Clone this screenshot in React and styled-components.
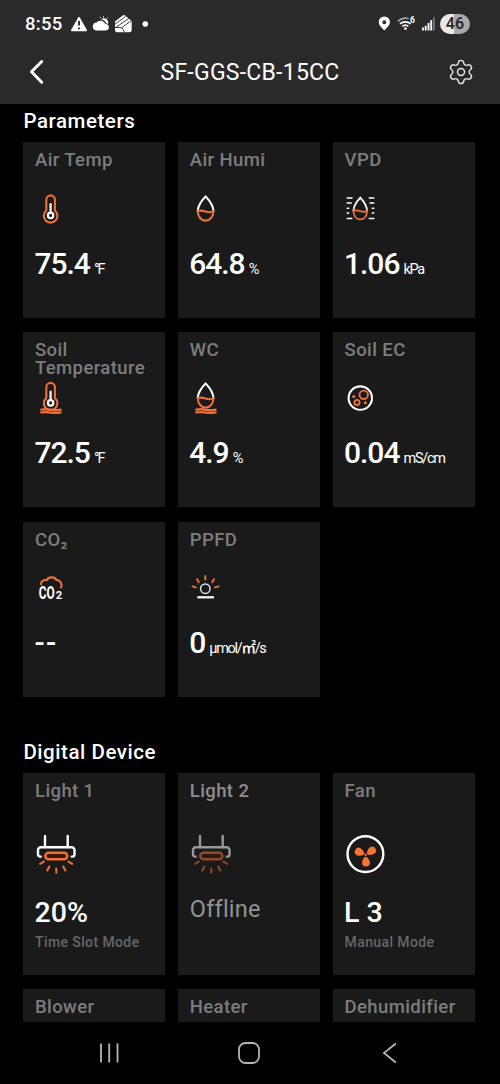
import React from "react";
import styled, { createGlobalStyle } from "styled-components";
import { Settings } from "lucide-react";

const ORANGE = "#ee7039";

const parameters = [
    { id: 1, title: "Air Temp", icon: "temp", value: "75.4", unit: "°F" },
    { id: 2, title: "Air Humi", icon: "drop", value: "64.8", unit: "%" },
    { id: 3, title: "VPD", icon: "vpd", value: "1.06", unit: "kPa" },
    { id: 4, title: "Soil Temperature", icon: "soilTemp", value: "72.5", unit: "°F" },
    { id: 5, title: "WC", icon: "wc", value: "4.9", unit: "%" },
    { id: 6, title: "Soil EC", icon: "ec", value: "0.04", unit: "mS/cm" },
    { id: 7, title: "CO₂", icon: "co2", value: "--" },
    { id: 8, title: "PPFD", icon: "ppfd", value: "0", unit: "μmol/㎡/s" },
];

const devices = [
    { id: 1, title: "Light 1", icon: "light", value: "20%", mode: "Time Slot Mode" },
    { id: 2, title: "Light 2", icon: "light", offline: true },
    { id: 3, title: "Fan", icon: "fan", value: "L 3", mode: "Manual Mode" },
    { id: 4, title: "Blower" },
    { id: 5, title: "Heater" },
    { id: 6, title: "Dehumidifier" },
];

/* ---------- icons ---------- */

const Thermometer = () => (
    <>
        <path d="M11.3 21.6V10.7a4.3 4.3 0 0 1 8.6 0v10.9a6.8 6.8 0 1 1-8.6 0Z" stroke={ORANGE} />
        <circle cx="15.6" cy="26.4" r="2.7" strokeWidth="2.2" />
        <path d="M15.6 23.4V15.2" strokeWidth="2.2" />
    </>
);

const Drop = () => (
    <>
        <path d="M7.7 22C8 17 12 11.2 15.6 7.4c3.6 3.8 7.6 9.6 7.9 14.6" />
        <path d="M7.7 22c.2 6 3.6 9.6 7.9 9.600s7.700-3.600 7.900-9.600c-2.600 1.800-5.200 1.400-7.900.5s-5.300-1.200-7.900-.5Z" stroke={ORANGE} />
    </>
);

const Ground = () => (
    <path d="M6.2 31.6q5-.8 10 .2t9.4-.2M6.2 34.4q5-.6 10 .2t9.4-.2" stroke={ORANGE} strokeWidth="2.3" />
);

const smallIcons = {
    temp: <Thermometer />,
    drop: <Drop />,
    vpd: (
        <>
            <g transform="translate(1.7 1.9) scale(.87 .9)">
                <Drop />
            </g>
            <path
                d="M2.2 9h4.8M2.2 14h4M2.2 19.200h1.4M2.2 24h1.4M2.2 29.500h4.6M24.3 9h4.5M25 14h3.8M27.3 19.200h1.5M27.3 24h1.5M24.3 29.500h4.5"
                strokeWidth="1.5"
            />
        </>
    ),
    soilTemp: (
        <>
            <g transform="translate(0 -1.5)">
                <Thermometer />
            </g>
            <Ground />
        </>
    ),
    wc: (
        <>
            <g transform="translate(0 -2)">
                <Drop />
            </g>
            <Ground />
        </>
    ),
    ec: (
        <>
            <circle cx="15.3" cy="20.1" r="11.7" />
            <g stroke={ORANGE} strokeWidth="1.9">
                <circle cx="18.7" cy="16.8" r="4.2" />
                <circle cx="12" cy="24.5" r="2.6" />
            </g>
            <g fill={ORANGE} stroke="none">
                <circle cx="8.7" cy="18.5" r="1.6" />
                <circle cx="20.3" cy="24.8" r="1.6" />
            </g>
        </>
    ),
    co2: (
        <>
            <path d="M6 16.2c-.2-2.8 2.6-4.8 5.6-3.9 1.2-3.5 8-4.2 9.8-.3 3.9-.2 6.3 4.2 4.7 7.4" stroke={ORANGE} />
            <g fill="#fff" stroke="none" fontFamily="Roboto, sans-serif" fontWeight="700">
                <text transform="translate(3.700 31) scale(.68 1)" fontSize="17.5">CO</text>
                <text transform="translate(20.700 31) scale(1.020 1)" fontSize="11">2</text>
            </g>
        </>
    ),
    ppfd: (
        <>
            <circle cx="15.3" cy="20.7" r="4.7" stroke="#d5e4ee" strokeWidth="1.5" />
            <path d="M7.3 29.3h16.7" strokeLinecap="butt" strokeWidth="2.2" />
            <path
                d="M2.6 18.3l3.2 1M7.1 11.2l1.7 3M15.3 7.9v3.7M23.9 11.2l-1.7 3M28.5 18.3l-3.5 1"
                stroke={ORANGE}
                strokeWidth="1.9"
            />
        </>
    ),
};

const bigIcons = {
    light: (
        <>
            <path d="M10 3v11M32.7 3v11" />
            <path d="M5.8 23.6H5a2 2 0 0 1-2-2V17a2.700 2.700 0 0 1 2.700-2.700h31A2.700 2.700 0 0 1 39.500 17v4.600a2 2 0 0 1-2 2h-.8" />
            <g stroke={ORANGE}>
                <rect x="10.3" y="19.7" width="22" height="6.6" rx="3.3" fill="#3d1509" strokeWidth="2.5" />
                <path
                    d="M8.8 28.6l-3.700 2.200M14.400 33.500l-2.200 3.900M21.300 35.600v4.200M28.200 33.500l2.200 3.900M33.500 28.600l3.700 2.200"
                    strokeWidth="2.1"
                />
            </g>
        </>
    ),
    fan: (
        <>
            <circle cx="20.4" cy="21.1" r="17.9" />
            <g fill="#f97432" stroke="none">
                {[0, 117, 238].map((deg) => (
                    <path
                        key={deg}
                        transform={`rotate(${deg} 20.7 21.9)`}
                        d="M19.300 24.200q1.500-.9 2.900 0c1.600 2 2.700 3.700 2.700 5.400a3.900 3.900 0 0 1-7.800 0c0-1.700.7-3.400 2.200-5.400Z"
                    />
                ))}
                <circle cx="20.7" cy="21.7" r="1.2" />
            </g>
        </>
    ),
};

const StatusIcons = () => (
    <svg width="82" height="24" viewBox="0 0 82 24" fill="#fff">
        <path d="M10 5.6 17.3 18.4H2.7Z" stroke="#fff" strokeWidth="1.5" strokeLinejoin="round" />
        <path d="M10 9v4.5M10 15.5v1.8" stroke="#2a2a2a" strokeWidth="1.9" />
        <path d="M28 18.5a4 4 0 0 1-.4-8 5.200 5.200 0 0 1 8.800 1.600 3.200 3.200 0 1 1 .4 6.400Z" />
        <path d="M32 7.600a4.200 4.200 0 0 1 7.200 3.200 4 4 0 0 1-.3 1.200l-1.600-.7a6.500 6.500 0 0 0-5.300-3.700Z" />
        <path d="M34.5 4.3v1.2M38.5 5.500l-.8 1M31 5l.6.9" stroke="#fff" strokeWidth="1" />
        <path d="M46 9.500 54 3.300q.8-.5 1.600 0l6.300 5q.8.700.8 1.600v8q0 2.400-2.300 2.400H48.300Q46 20.300 46 18Z" />
        <path d="M45.500 12.600 56.500 4.500M46.500 15.600 60 6.300M52.500 15.800l10-7.200M46 15.500h5q2.200 0 3.200 2l1.300 3" stroke="#2a2a2a" strokeWidth="0.9" fill="none" />
        <circle cx="76.3" cy="12" r="2.8" />
    </svg>
);

const SignalIcons = () => (
    <svg width="60" height="24" viewBox="0 0 60 24" fill="none" stroke="#fff">
        <path
            d="M9.300 4.400a5.600 5.600 0 0 0-5.600 5.600c0 3.500 3.300 5.500 5.600 8.600 2.300-3.100 5.600-5.100 5.600-8.600a5.600 5.600 0 0 0-5.600-5.600Zm0 3.800a2 2 0 1 1 0 4 2 2 0 0 1 0-4Z"
            fill="#fff"
            stroke="none"
        />
        <path d="M22.8 9.3a12 12 0 0 1 11-2.7" stroke="#a0a0a0" strokeWidth="1.6" />
        <path d="M25 11.9a8 8 0 0 1 10.700 0M27.300 14.400a4.700 4.700 0 0 1 6.100 0" strokeWidth="1.7" />
        <circle cx="30.4" cy="16.6" r="1.4" fill="#fff" stroke="none" />
        <text x="35" y="10.5" fontSize="8.5" fontWeight="700" fontFamily="Roboto, sans-serif" fill="#fff" stroke="none">6</text>
        <path d="M47.9 18.4v-2.8M50.7 18.4v-4.6M53.5 18.4v-7.4M56.2 18.4V8.2" strokeWidth="1.9" />
        <path d="M58.9 18.4V5.3" stroke="#777" strokeWidth="1.7" />
    </svg>
);

/* ---------- page ---------- */

const ParameterCard = ({ title, icon, value, unit }) => (
    <Card>
        <Label>{title}</Label>
        <SmallIcon viewBox="0 0 32 40">{smallIcons[icon]}</SmallIcon>
        <Reading $empty={value === "--"}>
            {value}
            {unit && <Unit $tight={unit === "°F"}>{unit}</Unit>}
        </Reading>
    </Card>
);

const DeviceCard = ({ title, icon, value, mode, offline }) => (
    <Card $tall>
        <Label $light={offline}>{title}</Label>
        {icon && (
            <BigIcon viewBox="0 0 42 42" $dim={offline}>
                {bigIcons[icon]}
            </BigIcon>
        )}
        {offline ? <Offline>Offline</Offline> : <State>{value}</State>}
        {mode && <Mode>{mode}</Mode>}
    </Card>
);

const App = () => {
    return (
        <>
            <GlobalStyle />
            <Phone>
                <Header>
                    <StatusBar>
                        <Clock>8:55</Clock>
                        <StatusIcons />
                        <Spacer />
                        <SignalIcons />
                        <Battery>46</Battery>
                    </StatusBar>
                    <TitleBar>
                        <svg width="28" height="30" viewBox="0 0 28 30" fill="none" stroke="#fff" strokeWidth="3" strokeLinecap="round" strokeLinejoin="round">
                            <path d="M17.7 4.5 7.5 14.8l10.200 10.400" />
                        </svg>
                        <h1>SF-GGS-CB-15CC</h1>
                        <Settings size={28} strokeWidth={1.2} color="#e8e8e8" />
                    </TitleBar>
                </Header>
                <Content>
                    <Heading>Parameters</Heading>
                    <Grid>
                        {parameters.map((curElem) => (
                            <ParameterCard key={curElem.id} {...curElem} />
                        ))}
                    </Grid>
                    <Heading $spaced>Digital Device</Heading>
                    <Grid>
                        {devices.map((curElem) => (
                            <DeviceCard key={curElem.id} {...curElem} />
                        ))}
                    </Grid>
                </Content>
                <NavBar>
                    <svg width="24" height="24" viewBox="0 0 24 24">
                        <path d="M4 2.5v19M12.2 2.5v19M20.5 2.5v19" />
                    </svg>
                    <svg width="24" height="24" viewBox="0 0 24 24">
                        <rect x="2" y="2" width="20" height="20" rx="6.5" />
                    </svg>
                    <svg width="24" height="24" viewBox="0 0 24 24">
                        <path d="M19.8 2.5 8 12l11.800 9.500" />
                    </svg>
                </NavBar>
            </Phone>
        </>
    );
};

const GlobalStyle = createGlobalStyle`
    * {
        box-sizing: border-box;
        margin: 0;
        padding: 0;
    }

    body {
        background: #000;
        font-family: Roboto, "Noto Sans CJK SC", sans-serif;
    }
`;

const Phone = styled.div`
    width: 500px;
    height: 1084px;
    display: flex;
    flex-direction: column;
    background: #000;
    color: #fff;
    overflow: hidden;
`;

const Header = styled.header`
    height: 104px;
    flex: none;
    background: #2a2a2a;
`;

const StatusBar = styled.div`
    height: 47px;
    display: flex;
    align-items: center;
    padding: 0 30px 0 25px;
`;

const Clock = styled.span`
    width: 44px;
    font-size: 18.5px;
    font-weight: 500;
    letter-spacing: 0.3px;
`;

const Spacer = styled.div`
    flex: 1;
`;

const Battery = styled.span`
    width: 30px;
    height: 20px;
    margin-left: 5px;
    border-radius: 10px;
    background: linear-gradient(90deg, #e9e9e9 46%, #a9a9a9 46%);
    color: #2a2a2a;
    font-size: 16px;
    font-weight: 600;
    line-height: 20px;
    text-align: center;
`;

const TitleBar = styled.div`
    height: 50px;
    display: flex;
    align-items: center;
    justify-content: space-between;
    padding: 0 25px 0 24px;

    h1 {
        margin-left: 1px;
        font-size: 23px;
        font-weight: 400;
        letter-spacing: 0.25px;
    }
`;

const Content = styled.main`
    height: 917.5px;
    flex: none;
    padding: 5px 25px 0 23.4px;
    overflow: hidden;
`;

const Heading = styled.h2`
    height: 33.3px;
    margin-top: ${({ $spaced }) => ($spaced ? "42.6px" : "0")};
    font-size: 20.5px;
    font-weight: 500;
    line-height: 24px;
    letter-spacing: 0.55px;
`;

const Grid = styled.div`
    display: grid;
    grid-template-columns: repeat(3, 142px);
    column-gap: 12.8px;
    row-gap: 14.4px;
`;

const Card = styled.article`
    height: ${({ $tall }) => ($tall ? "201.5px" : "175.4px")};
    padding: ${({ $tall }) => ($tall ? "9.300px" : "9px")} 8px 0 11.6px;
    display: flex;
    flex-direction: column;
    background: #1a1a1a;
`;

const Label = styled.h3`
    height: 37.3px;
    flex: none;
    color: ${({ $light }) => ($light ? "#8e8e8e" : "#7d7d7d")};
    font-size: 18.5px;
    font-weight: 500;
    line-height: 18.4px;
    letter-spacing: 0.4px;
`;

const Icon = styled.svg`
    flex: none;
    fill: none;
    stroke: #fff;
    stroke-width: 2.1;
    stroke-linecap: round;
    stroke-linejoin: round;
`;

const SmallIcon = styled(Icon)`
    width: 32px;
    height: 40px;
`;

const BigIcon = styled(Icon)`
    width: 42px;
    height: 42px;
    margin-top: 13.7px;
    stroke-width: 2.4;
    opacity: ${({ $dim }) => ($dim ? 0.55 : 1)};
`;

const Reading = styled.p`
    margin-top: 17px;
    margin-left: -0.6px;
    font-size: 30px;
    font-weight: 500;
    line-height: 36px;
    letter-spacing: ${({ $empty }) => ($empty ? "1.4px" : "-1px")};
    white-space: nowrap;
`;

const Unit = styled.span`
    margin-left: 4px;
    font-size: 14.5px;
    font-weight: 450;
    letter-spacing: ${({ $tight }) => ($tight ? "-1.9px" : "-1.3px")};
`;

const State = styled.p`
    margin-top: 19.2px;
    margin-left: -0.5px;
    font-size: 28.5px;
    font-weight: 500;
    line-height: 36px;
`;

const Mode = styled.p`
    margin-top: 2px;
    color: #666;
    font-size: 14px;
    font-weight: 500;
    line-height: 18px;
    letter-spacing: 0.4px;
`;

const Offline = styled.p`
    margin-top: 15.7px;
    color: #929292;
    font-size: 23.5px;
    line-height: 36px;
    letter-spacing: 0.2px;
`;

const NavBar = styled.nav`
    flex: 1;
    display: flex;
    align-items: center;
    justify-content: space-between;
    padding: 0 100px 0 97px;

    svg {
        fill: none;
        stroke: #b4b4b4;
        stroke-width: 1.8;
    }
`;

export default App;
